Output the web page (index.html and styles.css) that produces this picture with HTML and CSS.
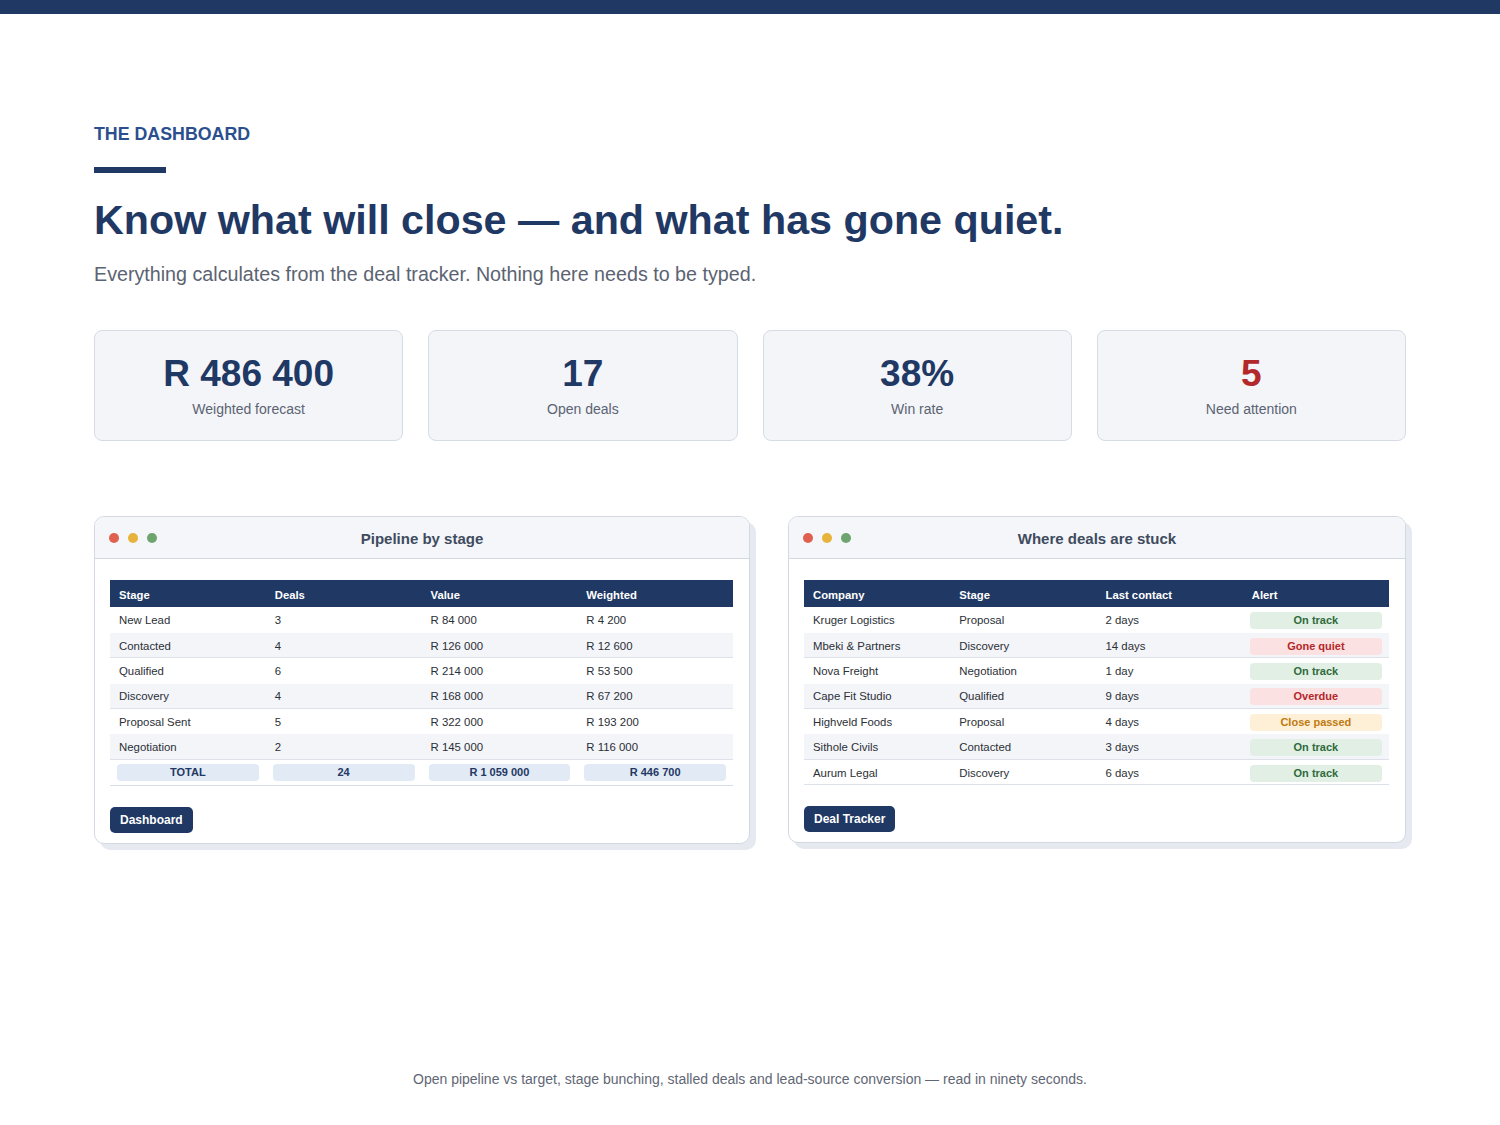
FILE: index.html
```html
<!DOCTYPE html>
<html lang="en">
<head>
<meta charset="utf-8">
<title>The Dashboard</title>
<link rel="stylesheet" href="styles.css">
</head>
<body>
<div class="topbar"></div>
<main class="page">
  <div class="eyebrow">THE DASHBOARD</div>
  <div class="rule"></div>
  <h1 class="headline">Know what will close — and what has gone quiet.</h1>
  <p class="lede">Everything calculates from the deal tracker. Nothing here needs to be typed.</p>

  <section class="stats">
    <div class="stat"><div class="stat-value">R 486 400</div><div class="stat-label">Weighted forecast</div></div>
    <div class="stat"><div class="stat-value">17</div><div class="stat-label">Open deals</div></div>
    <div class="stat"><div class="stat-value">38%</div><div class="stat-label">Win rate</div></div>
    <div class="stat"><div class="stat-value alert">5</div><div class="stat-label">Need attention</div></div>
  </section>

  <section class="windows">
    <div class="window">
      <div class="titlebar">
        <div class="dots"><span class="dot red"></span><span class="dot yellow"></span><span class="dot green"></span></div>
        <div class="wtitle">Pipeline by stage</div>
        <div></div>
      </div>
      <div class="wbody">
        <table class="grid">
          <thead><tr><th>Stage</th><th>Deals</th><th>Value</th><th>Weighted</th></tr></thead>
          <tbody>
            <tr><td>New Lead</td><td>3</td><td>R 84 000</td><td>R 4 200</td></tr>
            <tr class="alt"><td>Contacted</td><td>4</td><td>R 126 000</td><td>R 12 600</td></tr>
            <tr><td>Qualified</td><td>6</td><td>R 214 000</td><td>R 53 500</td></tr>
            <tr class="alt"><td>Discovery</td><td>4</td><td>R 168 000</td><td>R 67 200</td></tr>
            <tr><td>Proposal Sent</td><td>5</td><td>R 322 000</td><td>R 193 200</td></tr>
            <tr class="alt"><td>Negotiation</td><td>2</td><td>R 145 000</td><td>R 116 000</td></tr>
            <tr class="total"><td><span class="pill tot">TOTAL</span></td><td><span class="pill tot">24</span></td><td><span class="pill tot">R 1 059 000</span></td><td><span class="pill tot">R 446 700</span></td></tr>
          </tbody>
        </table>
        <div class="btn">Dashboard</div>
      </div>
    </div>

    <div class="window">
      <div class="titlebar">
        <div class="dots"><span class="dot red"></span><span class="dot yellow"></span><span class="dot green"></span></div>
        <div class="wtitle">Where deals are stuck</div>
        <div></div>
      </div>
      <div class="wbody">
        <table class="grid">
          <thead><tr><th>Company</th><th>Stage</th><th>Last contact</th><th>Alert</th></tr></thead>
          <tbody>
            <tr><td>Kruger Logistics</td><td>Proposal</td><td>2 days</td><td><span class="pill ok">On track</span></td></tr>
            <tr class="alt"><td>Mbeki &amp; Partners</td><td>Discovery</td><td>14 days</td><td><span class="pill bad">Gone quiet</span></td></tr>
            <tr><td>Nova Freight</td><td>Negotiation</td><td>1 day</td><td><span class="pill ok">On track</span></td></tr>
            <tr class="alt"><td>Cape Fit Studio</td><td>Qualified</td><td>9 days</td><td><span class="pill bad">Overdue</span></td></tr>
            <tr><td>Highveld Foods</td><td>Proposal</td><td>4 days</td><td><span class="pill warn">Close passed</span></td></tr>
            <tr class="alt"><td>Sithole Civils</td><td>Contacted</td><td>3 days</td><td><span class="pill ok">On track</span></td></tr>
            <tr class="last"><td>Aurum Legal</td><td>Discovery</td><td>6 days</td><td><span class="pill ok">On track</span></td></tr>
          </tbody>
        </table>
        <div class="btn">Deal Tracker</div>
      </div>
    </div>
  </section>

  <p class="footnote">Open pipeline vs target, stage bunching, stalled deals and lead-source conversion — read in ninety seconds.</p>
</main>
</body>
</html>
```

FILE: styles.css
```css
* { box-sizing: border-box; }
html, body { margin: 0; padding: 0; background: #ffffff; }
body { font-family: "Liberation Sans", Arial, Helvetica, sans-serif; color: #2b2f36; }

.topbar { height: 14px; background: #1f3864; }

.page { width: 1312px; margin: 0 auto; padding: 0; }

.eyebrow { margin-top: 109px; font-size: 17.8px; line-height: 22px; font-weight: 700; color: #2b4f8e; }
.rule { margin-top: 22px; width: 72px; height: 6px; background: #1f3864; }
.headline { margin: 22px 0 0; font-size: 41.25px; line-height: 50px; font-weight: 700; color: #1f3864; letter-spacing: 0; }
.lede { margin: 16px 0 0; font-size: 19.7px; line-height: 26px; color: #5b6372; }

.stats { margin-top: 43px; display: grid; grid-template-columns: repeat(4, 1fr); gap: 25px; }
.stat { height: 111px; background: #f3f5f9; border: 1px solid #d6dce6; border-radius: 8px; text-align: center; padding-top: 22px; }
.stat-value { font-size: 37px; line-height: 41px; font-weight: 700; color: #1f3864; }
.stat-value.alert { color: #b2282b; }
.stat-label { margin-top: 5px; font-size: 14px; line-height: 20px; color: #5b6372; }

.windows { margin-top: 75px; display: grid; grid-template-columns: 656px 618px; gap: 38px; align-items: start; }
.window { background: #ffffff; border: 1px solid #d3d9e3; border-radius: 10px; box-shadow: 6px 6px 0 #e6e9f0; overflow: hidden; }
.titlebar { height: 42px; background: #f4f6f9; border-bottom: 1px solid #d3d9e3; display: grid; grid-template-columns: 1fr auto 1fr; align-items: center; padding: 0 14px; }
.dots { display: flex; gap: 9px; }
.dot { width: 10px; height: 10px; border-radius: 50%; display: block; }
.dot.red { background: #e0604f; }
.dot.yellow { background: #e8b33a; }
.dot.green { background: #6ea56f; }
.wtitle { font-size: 15px; font-weight: 700; color: #3f4b5e; padding-top: 2px; }

.wbody { padding: 21px 16px 10px 15px; }
.grid { width: 100%; border-collapse: collapse; table-layout: fixed; }
.grid th { height: 27px; background: #1f3864; color: #ffffff; font-size: 11.3px; font-weight: 700; text-align: left; padding: 2px 9px 0; }
.grid td { height: 25.4px; font-size: 11.4px; color: #2b2f36; padding: 1px 9px 0; white-space: nowrap; border-bottom: 1px solid #ffffff; }
.grid tr.alt td { background: #f3f5f9; border-bottom: 1px solid #dde2ea; }
.grid tr.last td { border-bottom: 1px solid #dde2ea; }
.grid tr.total td { height: 26px; padding: 0 7px; border-bottom: 1px solid #d8dde6; }

.pill { display: block; height: 17px; line-height: 17px; border-radius: 4px; text-align: center; font-size: 11px; font-weight: 700; }
.pill.tot { background: #e2eaf5; color: #1f3864; }
.grid td:last-child .pill.ok, .grid td:last-child .pill.bad, .grid td:last-child .pill.warn { margin: 1px -2px 0; }
.pill.ok { background: #e2efe4; color: #2f6b3c; }
.pill.bad { background: #fbe1e1; color: #b3272a; }
.pill.warn { background: #fdf0d6; color: #c17a12; }

.btn { display: inline-block; margin-top: 21px; height: 26px; line-height: 26px; padding: 0 10px; background: #1f3864; color: #ffffff; font-size: 12px; font-weight: 700; border-radius: 5px; }

.footnote { margin: 225px 0 0; text-align: center; font-size: 14px; line-height: 20px; color: #5f6775; }
```
